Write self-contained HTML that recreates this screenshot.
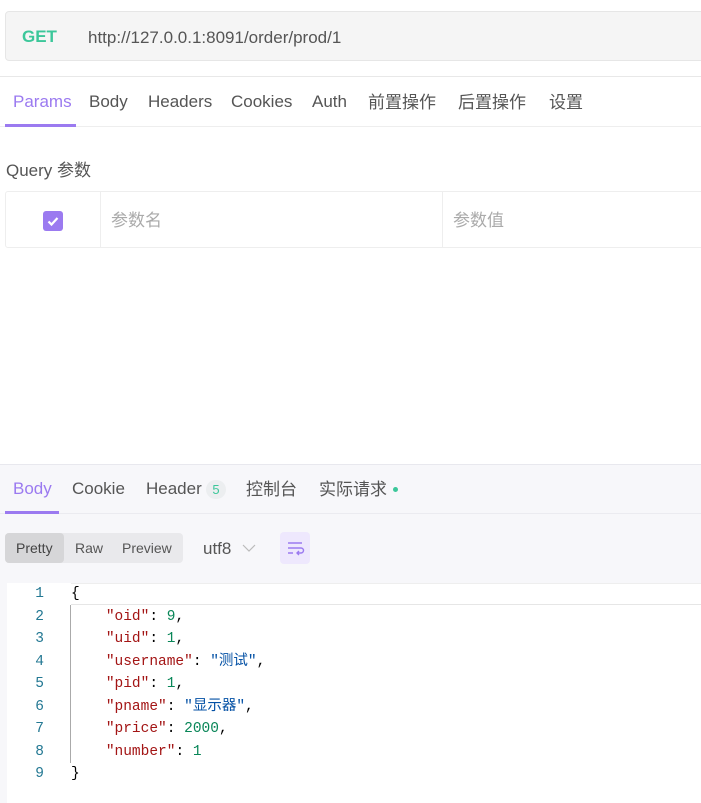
<!DOCTYPE html>
<html><head><meta charset="utf-8"><style>
*{margin:0;padding:0;box-sizing:border-box}
body{width:701px;height:803px;overflow:hidden;background:#fff;font-family:"Liberation Sans","Noto Sans CJK SC",sans-serif;color:#444;position:relative}
.abs{position:absolute;white-space:nowrap}
.url{left:5px;top:11px;width:710px;height:50px;background:#f5f5f5;border:1px solid #e6e6e6;border-radius:4px}
.tab{font-size:17px;color:#555}
.cjk{font-family:"Noto Sans CJK SC",sans-serif;line-height:1.2}
.mono{font-family:"Liberation Mono","Noto Sans CJK SC",monospace;font-size:14.5px}
</style></head><body>
<div class="abs url"></div>
<div class="abs" style="left:22px;top:27px;font-size:17px;font-weight:bold;color:#3cc79a">GET</div>
<div class="abs" style="left:88px;top:28px;font-size:17px;color:#555">http://127.0.0.1:8091/order/prod/1</div>
<div class="abs" style="left:0;top:76px;width:701px;height:1px;background:#e8e8e8"></div>
<div class="abs tab" style="left:13px;top:92px;color:#9b7af0">Params</div>
<div class="abs tab" style="left:89px;top:92px">Body</div>
<div class="abs tab" style="left:148px;top:92px">Headers</div>
<div class="abs tab" style="left:231px;top:92px">Cookies</div>
<div class="abs tab" style="left:312px;top:92px">Auth</div>
<div class="abs tab cjk" style="left:368px;top:91px">前置操作</div>
<div class="abs tab cjk" style="left:458px;top:91px">后置操作</div>
<div class="abs tab cjk" style="left:549px;top:91px">设置</div>
<div class="abs" style="left:0;top:126px;width:701px;height:1px;background:#eee"></div>
<div class="abs" style="left:5px;top:124px;width:71px;height:3px;background:#9b7af0"></div>
<div class="abs" style="left:6px;top:161px;font-size:17px;color:#555">Query</div>
<div class="abs cjk" style="left:57px;top:159px;font-size:17px;color:#555">参数</div>
<div class="abs" style="left:5px;top:191px;width:710px;height:57px;border:1px solid #eee;border-radius:3px"></div>
<div class="abs" style="left:100px;top:192px;width:1px;height:55px;background:#eee"></div>
<div class="abs" style="left:442px;top:192px;width:1px;height:55px;background:#eee"></div>
<div class="abs" style="left:43px;top:211px;width:20px;height:20px;background:#9b7af0;border-radius:3px"><svg width="20" height="20"><path d="M5.5 10.5l3 3 6-6.5" stroke="#fff" stroke-width="2.2" fill="none"/></svg></div>
<div class="abs cjk" style="left:111px;top:209px;font-size:17px;color:#aaa">参数名</div>
<div class="abs cjk" style="left:453px;top:209px;font-size:17px;color:#aaa">参数值</div>

<div class="abs" style="left:0;top:464px;width:701px;height:339px;background:#f7f7fa;border-top:1px solid #e8e8ee"></div>
<div class="abs tab" style="left:13px;top:479px;color:#9b7af0">Body</div>
<div class="abs tab" style="left:72px;top:479px">Cookie</div>
<div class="abs tab" style="left:146px;top:479px">Header</div>
<div class="abs" style="left:206px;top:480px;width:20px;height:19px;border-radius:10px;background:#eceef0;color:#3cc79a;font-size:13px;text-align:center;line-height:19px">5</div>
<div class="abs tab cjk" style="left:246px;top:478px">控制台</div>
<div class="abs tab cjk" style="left:319px;top:478px">实际请求</div>
<div class="abs" style="left:393px;top:487px;width:5px;height:5px;border-radius:50%;background:#3cc79a"></div>
<div class="abs" style="left:0;top:513px;width:701px;height:1px;background:#ebebf0"></div>
<div class="abs" style="left:5px;top:511px;width:54px;height:3px;background:#9b7af0"></div>
<div class="abs" style="left:5px;top:533px;width:178px;height:30px;background:#e9e9ec;border-radius:4px"></div>
<div class="abs" style="left:5px;top:533px;width:59px;height:30px;background:#d6d6d8;border-radius:4px"></div>
<div class="abs" style="left:16px;top:540px;font-size:14px;color:#444">Pretty</div>
<div class="abs" style="left:75px;top:540px;font-size:14px;color:#555">Raw</div>
<div class="abs" style="left:122px;top:540px;font-size:14px;color:#555">Preview</div>
<div class="abs" style="left:203px;top:539px;font-size:17px;color:#555">utf8</div>
<svg class="abs" style="left:242px;top:543px" width="14" height="10"><path d="M1 2l6 6 6-6" stroke="#bbb" fill="none" stroke-width="1.2"/></svg>
<div class="abs" style="left:280px;top:532px;width:30px;height:32px;background:#eee8fd;border-radius:4px"><svg width="30" height="32"><path d="M8 11h14M8 16h13a2.5 2.5 0 0 1 0 5h-4M19 19l-2 2 2 2M8 21h5" stroke="#9b7af0" stroke-width="1.4" fill="none"/></svg></div>
<div class="abs" style="left:7px;top:583px;width:700px;height:220px;background:#fff"></div>
<div class="abs" style="left:71px;top:583px;width:640px;height:22px;border-top:1px solid #eee;border-bottom:1px solid #e6e6e6"></div>
<div class="abs" style="left:70px;top:605px;width:1px;height:158px;background:#aaa"></div>
<div class="abs mono" style="left:0;top:583px;width:44px;text-align:right;line-height:22.5px;color:#237893">1<br>2<br>3<br>4<br>5<br>6<br>7<br>8<br>9</div>
<div class="abs mono" style="left:71px;top:583px;line-height:22.5px;color:#000;white-space:pre">{
    <span style="color:#a31515">"oid"</span>: <span style="color:#098658">9</span>,
    <span style="color:#a31515">"uid"</span>: <span style="color:#098658">1</span>,
    <span style="color:#a31515">"username"</span>: <span style="color:#0451a5">"测试"</span>,
    <span style="color:#a31515">"pid"</span>: <span style="color:#098658">1</span>,
    <span style="color:#a31515">"pname"</span>: <span style="color:#0451a5">"显示器"</span>,
    <span style="color:#a31515">"price"</span>: <span style="color:#098658">2000</span>,
    <span style="color:#a31515">"number"</span>: <span style="color:#098658">1</span>
}</div>
</body></html>
